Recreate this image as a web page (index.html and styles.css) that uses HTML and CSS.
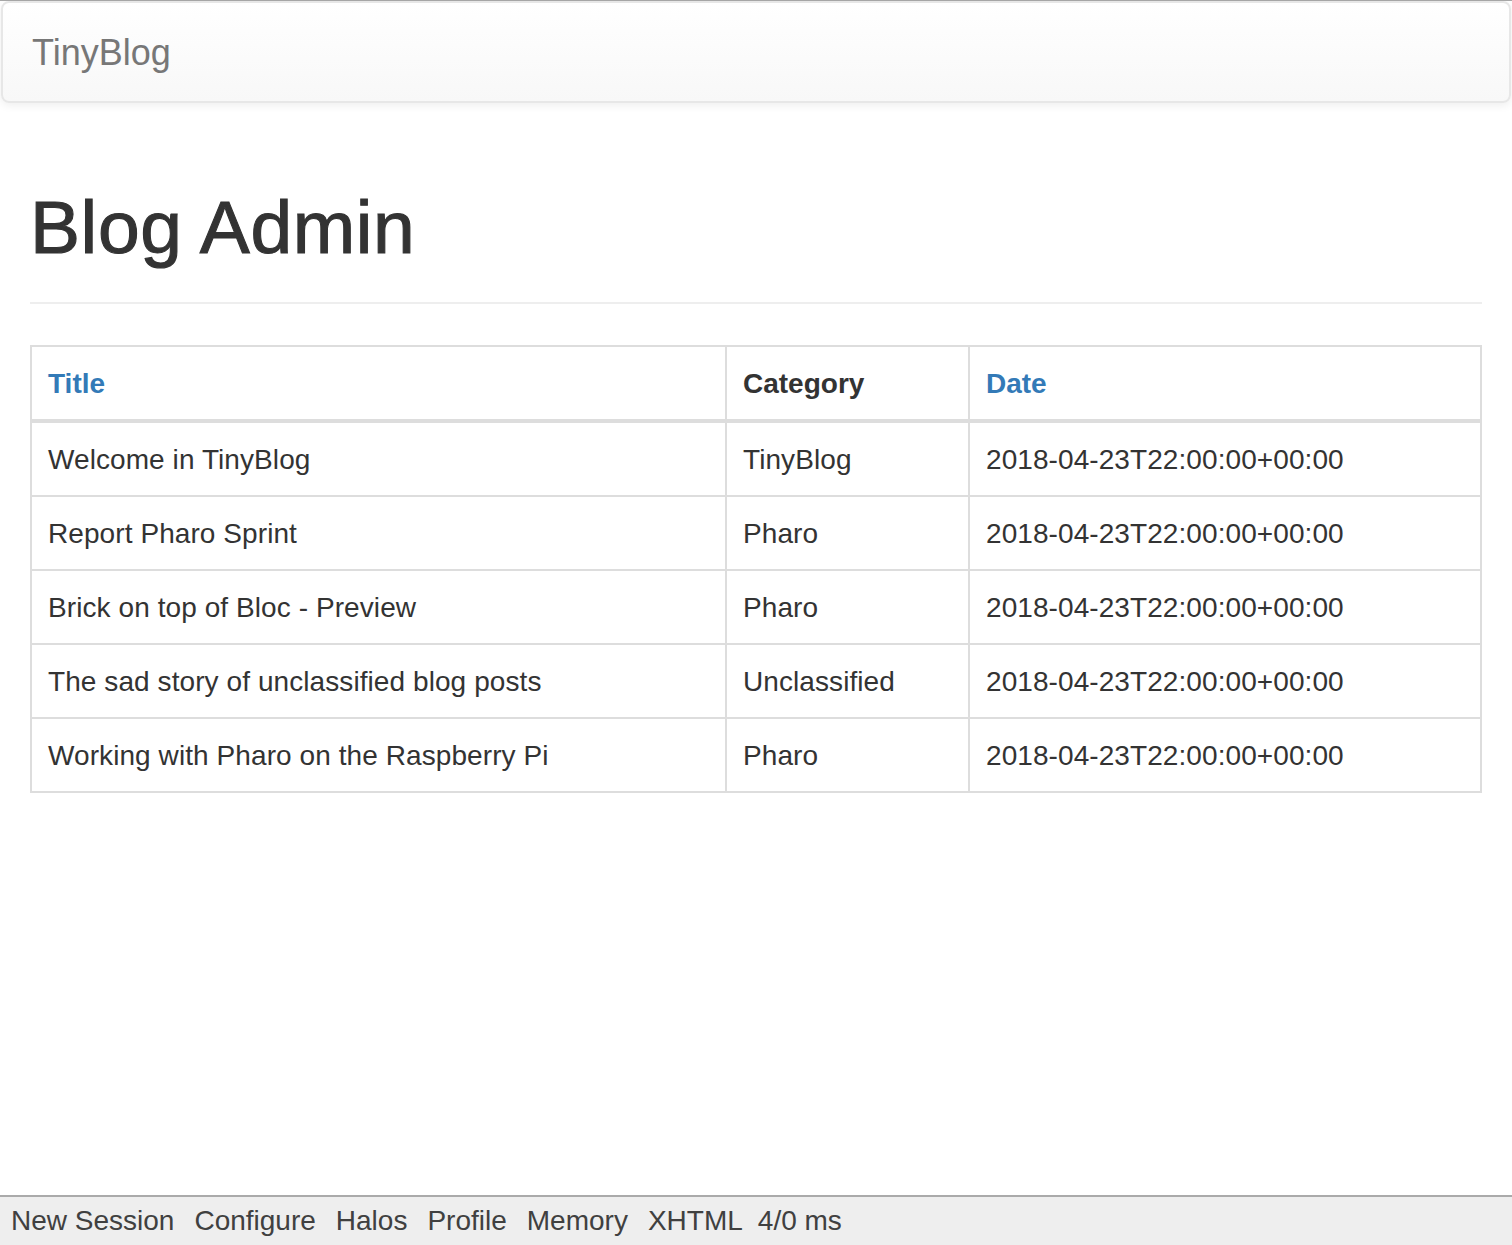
FILE: index.html
```html
<!DOCTYPE html>
<html>
<head>
<meta charset="utf-8">
<title>TinyBlog</title>
<link rel="stylesheet" href="styles.css">
</head>
<body>
<div class="frame">
  <nav class="navbar">
    <a class="brand" href="#">TinyBlog</a>
  </nav>
  <main class="container">
    <div class="page-header">
      <h1>Blog Admin</h1>
    </div>
    <table class="table">
      <colgroup>
        <col class="col-title">
        <col class="col-category">
        <col class="col-date">
      </colgroup>
      <thead>
        <tr>
          <th><a href="#">Title</a></th>
          <th>Category</th>
          <th><a href="#">Date</a></th>
        </tr>
      </thead>
      <tbody>
        <tr><td>Welcome in TinyBlog</td><td>TinyBlog</td><td>2018-04-23T22:00:00+00:00</td></tr>
        <tr><td>Report Pharo Sprint</td><td>Pharo</td><td>2018-04-23T22:00:00+00:00</td></tr>
        <tr><td>Brick on top of Bloc - Preview</td><td>Pharo</td><td>2018-04-23T22:00:00+00:00</td></tr>
        <tr><td>The sad story of unclassified blog posts</td><td>Unclassified</td><td>2018-04-23T22:00:00+00:00</td></tr>
        <tr><td>Working with Pharo on the Raspberry Pi</td><td>Pharo</td><td>2018-04-23T22:00:00+00:00</td></tr>
      </tbody>
    </table>
  </main>
</div>
<div class="toolbar">
  <a href="#">New Session</a>
  <a href="#">Configure</a>
  <a href="#">Halos</a>
  <a href="#">Profile</a>
  <a href="#">Memory</a>
  <a href="#">XHTML</a>
  <span class="timing">4/0 ms</span>
</div>
</body>
</html>
```

FILE: styles.css
```css
* { box-sizing: border-box; }
html, body {
  margin: 0;
  padding: 0;
  background: #fff;
}
body {
  font-family: "Liberation Sans", Arial, Helvetica, sans-serif;
  font-size: 28px;
  line-height: 40px;
  color: #333;
  border-top: 1px solid #a6a6a6;
}
a { color: #337ab7; text-decoration: none; }

.frame {
  padding: 0 1px;
}

.navbar {
  display: flex;
  align-items: center;
  height: 102px;
  border: 2px solid #e7e7e7;
  border-radius: 8px;
  background: linear-gradient(to bottom, #ffffff 0%, #f8f8f8 100%);
  box-shadow: inset 0 2px 0 rgba(255,255,255,.15), 0 2px 10px rgba(0,0,0,.075);
}
.brand {
  color: #777;
  font-size: 36px;
  line-height: 40px;
  padding: 0 30px 0 29px;
  margin-top: 2px;
}

.container {
  padding: 0 29px;
}

.page-header {
  margin: 81px 0 41px;
  padding-bottom: 18px;
  border-bottom: 2px solid #eee;
}
.page-header h1 {
  margin: 0 0 17px;
  padding-top: 3px;
  font-size: 75px;
  line-height: 80px;
  font-weight: 500;
  letter-spacing: 0.6px;
  color: #333;
  -webkit-text-stroke: 1.1px #333;
}

.table {
  width: 100%;
  border-collapse: collapse;
  table-layout: fixed;
  border: 2px solid #ddd;
}
.col-title { width: 695px; }
.col-category { width: 243px; }
.table th,
.table td {
  border: 2px solid #ddd;
  padding: 16px 16px;
  line-height: 40px;
  text-align: left;
  vertical-align: top;
  white-space: nowrap;
}
.table td {
  letter-spacing: 0.08px;
  padding-top: 17px;
  padding-bottom: 15px;
}
.table th {
  font-weight: bold;
  border-bottom-width: 4px;
  padding-top: 17px;
  padding-bottom: 15px;
}
.table th a { color: #337ab7; }

.toolbar {
  position: fixed;
  left: 0;
  right: 0;
  bottom: 0;
  height: 50px;
  background: #eeeeee;
  border-top: 2px solid #aaa;
  padding: 0 0 0 11px;
  display: flex;
  align-items: center;
  gap: 20px;
  font-size: 28px;
  line-height: 40px;
  color: #404040;
}
.toolbar a { color: #404040; }
.toolbar .timing { margin-left: -5px; }
```
